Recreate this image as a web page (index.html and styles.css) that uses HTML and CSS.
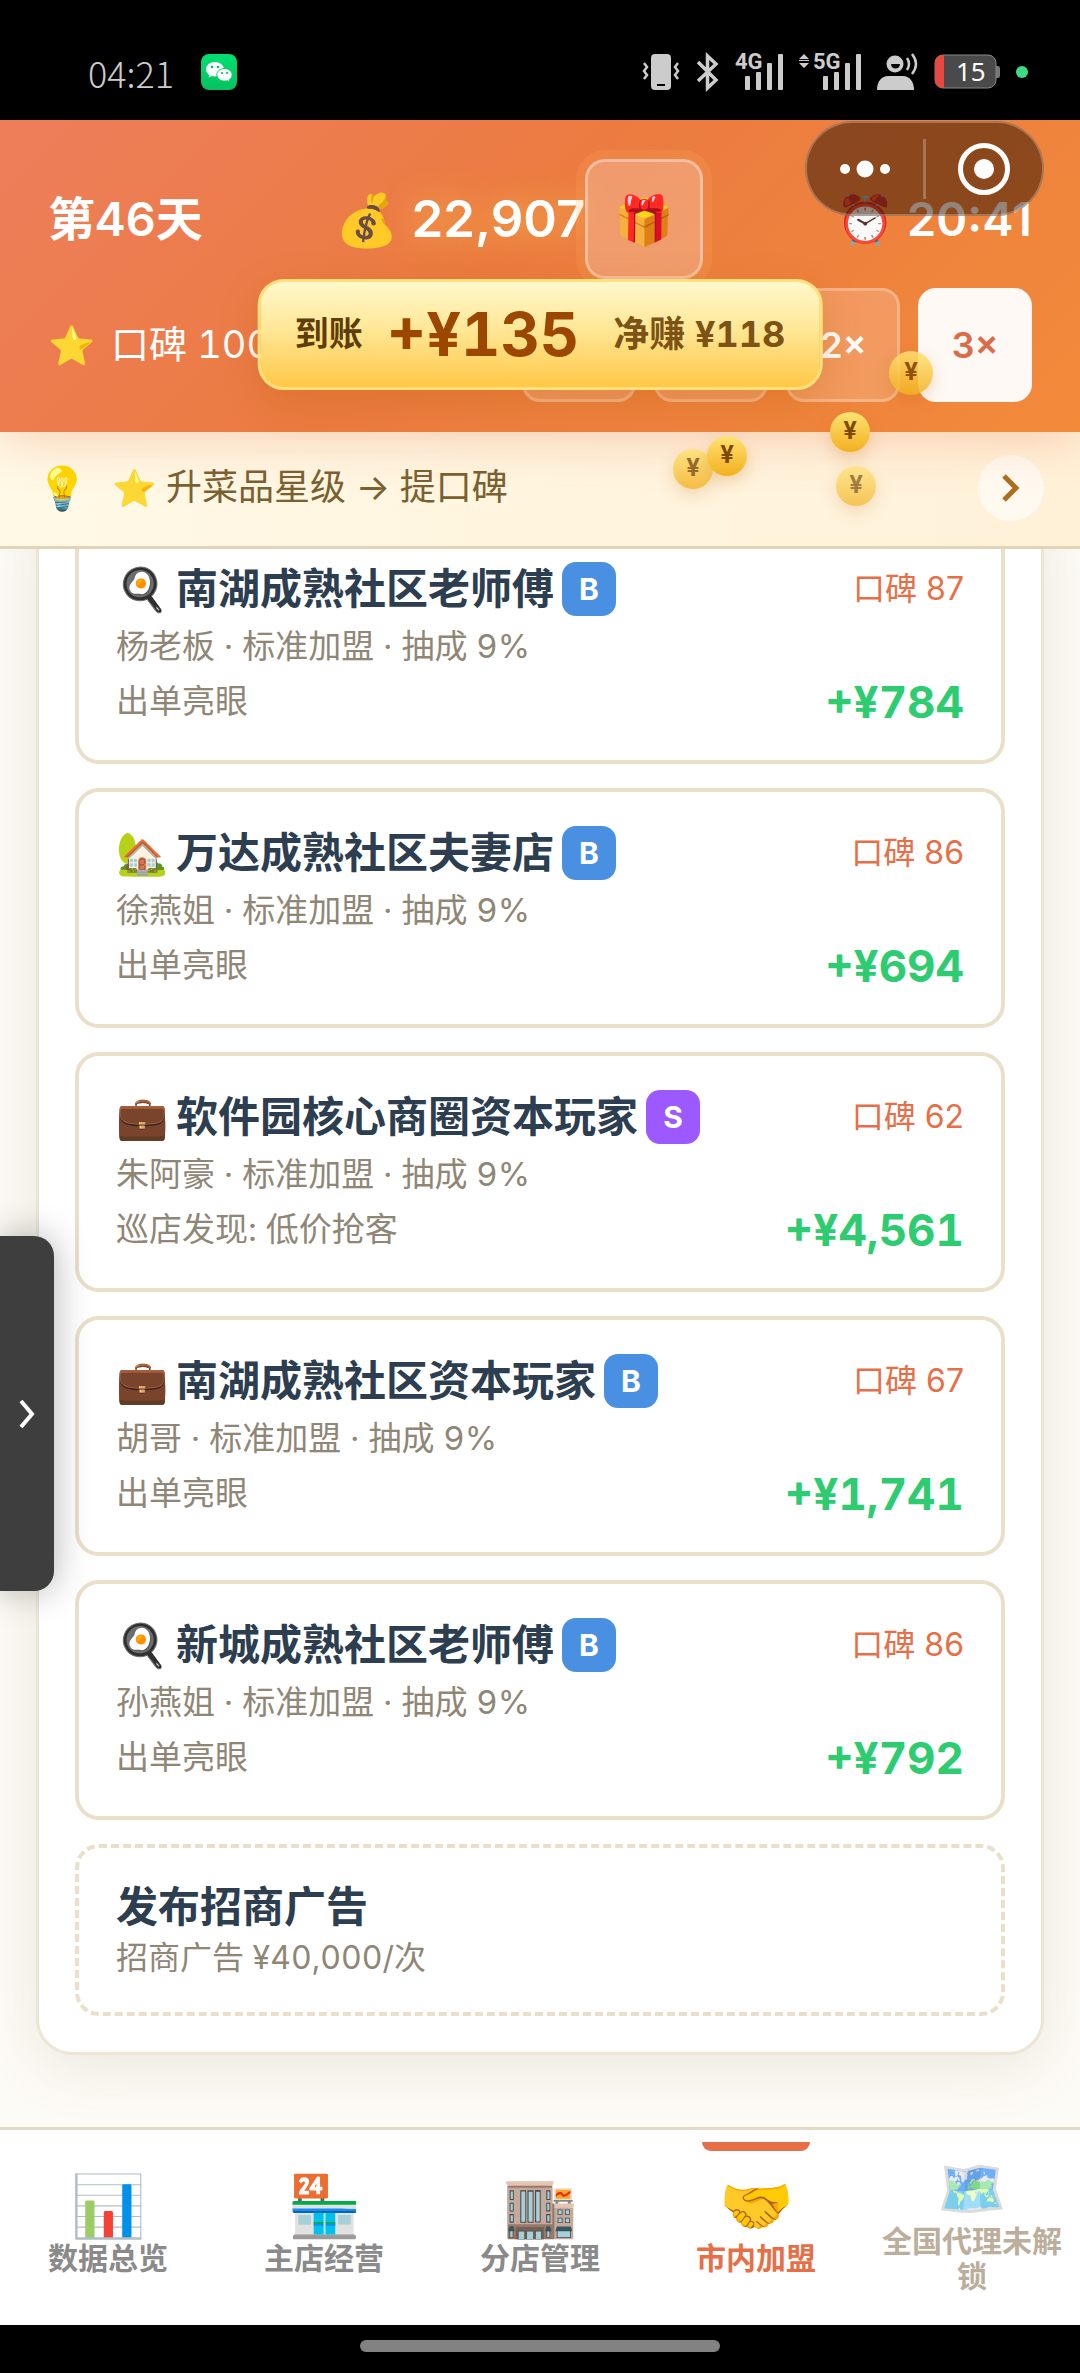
FILE: index.html
```html
<!DOCTYPE html>
<html lang="zh-CN">
<head>
  <meta charset="utf-8">
  <meta name="viewport" content="width=device-width, initial-scale=1">
  <title>市内加盟</title>
  <link rel="stylesheet" href="styles.css">
</head>
<body>
  <div class="status-bar">
    <div class="status-left">
      <span class="clock">04:21</span>
      <svg class="wechat" width="36" height="36" viewBox="0 0 36 36">
        <defs>
          <linearGradient id="wx" x1="0" y1="0" x2="0" y2="1"><stop offset="0" stop-color="#00e070"/><stop offset="1" stop-color="#06c160"/></linearGradient>
        </defs>
        <rect width="36" height="36" rx="8" fill="url(#wx)"/>
        <path d="M14 8c-5 0-9 3.200-9 7.300 0 2.300 1.200 4.300 3.200 5.600L7.500 23.500l3-1.500c1.100.300 2.300.500 3.500.500 5 0 9-3.200 9-7.200S19 8 14 8z" fill="#fff"/>
        <path d="M23.500 14.500c-4.300 0-7.700 2.800-7.700 6.300s3.400 6.300 7.700 6.300c1 0 2-.100 2.900-.400l2.500 1.300-.600-2.200c1.700-1.200 2.800-3 2.800-5 0-3.500-3.400-6.300-7.600-6.300z" fill="#fff" stroke="#05cf67" stroke-width="1"/>
        <g fill="#06b95c"><circle cx="11" cy="13" r="1.300"/><circle cx="17" cy="13" r="1.300"/><circle cx="21" cy="19" r="1.100"/><circle cx="26" cy="19" r="1.100"/></g>
      </svg>
    </div>
    <div class="status-right">
      <svg width="38" height="38" viewBox="0 0 38 38">
        <rect x="9" y="1" width="20" height="36" rx="4" fill="#ccc"/>
        <rect x="15" y="31" width="8" height="2" fill="#000"/>
        <path d="M2 10l3 4-3 4 3 4-3 4M36 10l-3 4 3 4-3 4 3 4" fill="none" stroke="#ccc" stroke-width="2.500"/>
      </svg>
      <svg width="23" height="38" viewBox="0 0 23 38">
        <path d="M2 9l18 18-8.500 8V3L20 11 2 28" fill="none" stroke="#ccc" stroke-width="3.500"/>
      </svg>
      <svg width="48" height="38" viewBox="0 0 48 38" fill="#ccc">
        <text class="net" x="0" y="16">4G</text>
        <rect x="10" y="23" width="5" height="14" rx="1"/><rect x="21" y="19" width="5" height="18" rx="1"/><rect x="32" y="10" width="5" height="27" rx="1"/><rect x="43" y="1" width="5" height="36" rx="1"/>
      </svg>
      <svg width="62" height="38" viewBox="0 0 62 38" fill="#ccc">
        <path d="M5 1l5 5H0zM5 15l5-5H0zM0 7h10v1H0z"/>
        <text class="net" x="14" y="16">5G</text>
        <rect x="24" y="23" width="5" height="14" rx="1"/><rect x="35" y="19" width="5" height="18" rx="1"/><rect x="46" y="10" width="5" height="27" rx="1"/><rect x="57" y="1" width="5" height="36" rx="1"/>
      </svg>
      <svg width="41" height="38" viewBox="0 0 41 38">
        <circle cx="18" cy="11" r="8.500" fill="#ccc"/>
        <path d="M14 11h9c0 6-9 6-9 0z" fill="#000"/>
        <path d="M0 37c0-9 5-14 11-14h15c6 0 11 5 11 14z" fill="#ccc"/>
        <path d="M30 5q4 6 0 12M35 1q8 10 0 20" fill="none" stroke="#ccc" stroke-width="2.500"/>
      </svg>
      <svg width="66" height="36" viewBox="0 0 66 36">
        <path d="M62 12h2q2 0 2 3v6q0 3-2 3h-2z" fill="#777"/>
        <rect x="1" y="1" width="61" height="33" rx="8" fill="#4a4a4a" stroke="#888"/>
        <path d="M10 1H9a8 8 0 0 0-8 8v17a8 8 0 0 0 8 8h1z" fill="#e8483f"/>
        <text class="battery-level" x="22" y="27">15</text>
      </svg>
      <svg width="12" height="12" viewBox="0 0 12 12"><circle cx="6" cy="6" r="6" fill="#3ddc84"/></svg>
    </div>
  </div>

  <header class="header">
    <div class="header-row">
      <span class="day">第46天</span>
      <div class="wallet">
        <span class="emoji bag">💰</span>
        <span class="money">22,907</span>
        <button class="gift" type="button" aria-label="礼物"><span class="emoji">🎁</span></button>
      </div>
      <div class="timer"><span class="emoji">⏰</span><span>20:41</span></div>
    </div>
    <div class="header-row">
      <div class="fame"><span class="emoji">⭐</span><span>口碑 100</span></div>
      <div class="speeds">
        <button type="button" class="speed" aria-label="暂停"></button>
        <button type="button" class="speed" aria-label="1×"></button>
        <button type="button" class="speed">2×</button>
        <button type="button" class="speed active">3×</button>
      </div>
    </div>

    <div class="capsule">
      <button type="button" aria-label="更多">
        <svg width="52" height="20" viewBox="0 0 52 20" fill="#fff"><circle cx="6" cy="10" r="5"/><circle cx="26" cy="10" r="8.500"/><circle cx="46" cy="10" r="5"/></svg>
      </button>
      <button type="button" aria-label="关闭">
        <svg width="54" height="54" viewBox="0 0 54 54"><circle cx="27" cy="27" r="23.500" fill="none" stroke="#fff" stroke-width="5"/><circle cx="27" cy="27" r="10" fill="#fff"/></svg>
      </button>
    </div>

    <div class="toast">
      <span class="toast-label">到账</span>
      <strong class="toast-amount">+¥135</strong>
      <span class="toast-net">净赚 ¥118</span>
    </div>

    <span class="coin coin-a">¥</span>
    <span class="coin coin-b">¥</span>
    <span class="coin coin-c">¥</span>
    <span class="coin coin-d">¥</span>
    <span class="coin coin-e">¥</span>
  </header>

  <div class="tip">
    <span class="emoji bulb">💡</span>
    <span class="emoji">⭐</span>
    <span class="tip-text">升菜品星级 → 提口碑</span>
    <button class="tip-next" type="button" aria-label="下一条">
      <svg width="18" height="28" viewBox="0 0 18 28"><path d="M2 2L14 14 2 26" fill="none" stroke="#a8701f" stroke-width="5"/></svg>
    </button>
  </div>

  <main class="content">
    <section class="panel">
      <article class="card">
        <div class="card-row">
          <h2><span class="emoji">🍳</span>南湖成熟社区老师傅<span class="badge">B</span></h2>
          <span class="score">口碑 87</span>
        </div>
        <p class="meta">杨老板 · 标准加盟 · 抽成 9%</p>
        <div class="card-row bottom">
          <span class="note">出单亮眼</span>
          <strong class="income">+¥784</strong>
        </div>
      </article>
      <article class="card">
        <div class="card-row">
          <h2><span class="emoji">🏡</span>万达成熟社区夫妻店<span class="badge">B</span></h2>
          <span class="score">口碑 86</span>
        </div>
        <p class="meta">徐燕姐 · 标准加盟 · 抽成 9%</p>
        <div class="card-row bottom">
          <span class="note">出单亮眼</span>
          <strong class="income">+¥694</strong>
        </div>
      </article>
      <article class="card">
        <div class="card-row">
          <h2><span class="emoji">💼</span>软件园核心商圈资本玩家<span class="badge s">S</span></h2>
          <span class="score">口碑 62</span>
        </div>
        <p class="meta">朱阿豪 · 标准加盟 · 抽成 9%</p>
        <div class="card-row bottom">
          <span class="note">巡店发现: 低价抢客</span>
          <strong class="income">+¥4,561</strong>
        </div>
      </article>
      <article class="card">
        <div class="card-row">
          <h2><span class="emoji">💼</span>南湖成熟社区资本玩家<span class="badge">B</span></h2>
          <span class="score">口碑 67</span>
        </div>
        <p class="meta">胡哥 · 标准加盟 · 抽成 9%</p>
        <div class="card-row bottom">
          <span class="note">出单亮眼</span>
          <strong class="income">+¥1,741</strong>
        </div>
      </article>
      <article class="card">
        <div class="card-row">
          <h2><span class="emoji">🍳</span>新城成熟社区老师傅<span class="badge">B</span></h2>
          <span class="score">口碑 86</span>
        </div>
        <p class="meta">孙燕姐 · 标准加盟 · 抽成 9%</p>
        <div class="card-row bottom">
          <span class="note">出单亮眼</span>
          <strong class="income">+¥792</strong>
        </div>
      </article>
      <button class="card card-add" type="button">
        <span class="add-title">发布招商广告</span>
        <span class="meta">招商广告 ¥40,000/次</span>
      </button>
    </section>
  </main>

  <button class="drawer" type="button" aria-label="展开">
    <svg width="18" height="30" viewBox="0 0 18 30"><path d="M3 2l11 13L3 28" fill="none" stroke="#fff" stroke-width="4"/></svg>
  </button>

  <nav class="tabs">
    <a href="#overview"><span class="emoji">📊</span>数据总览</a>
    <a href="#main-shop"><span class="emoji">🏪</span>主店经营</a>
    <a href="#branches"><span class="emoji">🏬</span>分店管理</a>
    <a href="#franchise" class="active"><span class="emoji">🤝</span>市内加盟</a>
    <a href="#agency" class="locked"><span class="emoji">🗺️</span>全国代理未解锁</a>
  </nav>
  <div class="home-bar"><span></span></div>
</body>
</html>
```
FILE: styles.css
```css
:root {
  --orange: #e76f47;
  --line: #eadfc8;
  --ink: #2c3e50;
  --muted: #8f8676;
}

* {
  box-sizing: border-box;
}

body {
  margin: 0;
  height: 100vh;
  display: flex;
  flex-direction: column;
  position: relative;
  overflow: hidden;
  font-family: Inter, "Noto Sans CJK SC", sans-serif;
  font-variant-numeric: tabular-nums;
  line-height: 1.2;
  background: #fdfbf6;
}

button {
  font-family: inherit;
  font-variant-numeric: inherit;
  padding: 0;
  border: 0;
  cursor: pointer;
}

svg {
  display: block;
  flex: none;
  overflow: visible;
}

.emoji {
  line-height: 1;
  flex: none;
}

/* status bar */
.status-bar {
  position: relative;
  z-index: 3;
  height: 120px;
  padding: 24px 52px 0 88px;
  display: flex;
  align-items: center;
  justify-content: space-between;
  background: #000;
}

.status-left {
  display: flex;
  align-items: center;
  gap: 27px;
}

.status-right {
  display: flex;
  align-items: center;
  gap: 16px;
}

.clock {
  font-family: "Noto Sans CJK SC", sans-serif;
  font-size: 36px;
  font-weight: 300;
  line-height: 34px;
  color: #ccc;
}

.net {
  font: 700 22px Roboto, sans-serif;
}

.battery-level {
  font: 400 26px "Noto Sans", sans-serif;
  fill: #fff;
}

/* header */
.header {
  position: relative;
  z-index: 2;
  padding: 39px 48px 30px;
  display: flex;
  flex-direction: column;
  gap: 9px;
  color: #fff;
  background: linear-gradient(135deg, #ee7e5b 0%, #eb7b40 45%, #f28a3a 100%);
  box-shadow: 0 6px 48px rgba(231, 111, 71, 0.3);
}

.header-row {
  display: flex;
  align-items: center;
  justify-content: space-between;
}

.day {
  font-size: 47px;
  font-weight: 600;
}

.wallet {
  display: flex;
  align-items: center;
}

.bag {
  font-size: 51px;
  margin-right: 12px;
}

.money {
  font-size: 51px;
  font-weight: 600;
  font-variant-numeric: normal;
  text-shadow: 0 0 30px rgba(255, 215, 90, 0.6);
}

.gift {
  width: 118px;
  height: 120px;
  font-size: 48px;
  border: 3px solid rgba(255, 255, 255, 0.35);
  border-radius: 20px;
  background: rgba(255, 255, 255, 0.24);
  box-shadow: 0 0 0 9px rgba(255, 170, 90, 0.2);
}

.timer {
  display: flex;
  align-items: center;
  gap: 12px;
  font-size: 47px;
  font-weight: 600;
  font-variant-numeric: normal;
}

.fame {
  display: flex;
  align-items: center;
  gap: 16px;
  font-size: 38px;
}

.speeds {
  display: flex;
  gap: 18px;
}

.speed {
  width: 114px;
  height: 114px;
  border: 3px solid rgba(255, 255, 255, 0.25);
  border-radius: 18px;
  background: rgba(255, 255, 255, 0.18);
  color: #fff;
  font-size: 36px;
  font-weight: 600;
}

.speed.active {
  border-color: #fef9f5;
  background: #fef9f5;
  color: #dc6b49;
}

.capsule {
  position: absolute;
  top: 1px;
  right: 36px;
  width: 239px;
  height: 95px;
  display: flex;
  align-items: center;
  border: 2px solid rgba(255, 255, 255, 0.25);
  border-radius: 48px;
  background: rgba(50, 20, 0, 0.52);
}

.capsule button {
  flex: 1;
  height: 60px;
  display: flex;
  align-items: center;
  justify-content: center;
  background: none;
}

.capsule button + button {
  border-left: 3px solid rgba(255, 255, 255, 0.25);
}

.toast {
  position: absolute;
  top: 159px;
  left: 50%;
  transform: translateX(-50%);
  height: 111px;
  padding: 0 34px;
  display: flex;
  align-items: center;
  white-space: nowrap;
  border: 3px solid #ffe07c;
  border-radius: 26px;
  background: linear-gradient(#fff8cc, #ffe796 45%, #ffc847);
  box-shadow: 0 12px 36px rgba(190, 100, 10, 0.3);
}

.toast-label {
  font-size: 34px;
  font-weight: 700;
  color: #5f3d08;
}

.toast-amount {
  margin: 0 34px 0 24px;
  font-size: 61px;
  color: #9c4700;
}

.toast-net {
  font-size: 36px;
  font-weight: 700;
  color: #7c5314;
}

.coin {
  position: absolute;
  width: 40px;
  height: 40px;
  border-radius: 50%;
  background: linear-gradient(#ffe272, #f3b01f);
  box-shadow: 0 6px 15px rgba(190, 110, 10, 0.25);
  color: #7c4a03;
  font-size: 24px;
  font-weight: 700;
  line-height: 38px;
  text-align: center;
}

.coin-a {
  top: 231px;
  left: 889px;
  width: 44px;
  height: 44px;
  line-height: 42px;
  opacity: 0.85;
}

.coin-b {
  top: 292px;
  left: 830px;
}

.coin-c {
  top: 316px;
  left: 707px;
}

.coin-d {
  top: 329px;
  left: 673px;
  z-index: -1;
  opacity: 0.8;
}

.coin-e {
  top: 346px;
  left: 836px;
  opacity: 0.7;
}

/* tip */
.tip {
  height: 117px;
  padding: 0 36px 3px;
  display: flex;
  align-items: center;
  border-bottom: 3px solid #e0d5b4;
  background: linear-gradient(90deg, #fff9e6, #fff1d8);
  color: #7a6030;
  font-size: 36px;
}

.tip .bulb {
  font-size: 42px;
  margin-right: 24px;
}

.tip-text {
  flex: 1;
  margin-left: 9px;
}

.tip-next {
  width: 66px;
  height: 66px;
  display: flex;
  align-items: center;
  justify-content: center;
  border-radius: 50%;
  background: rgba(255, 255, 255, 0.6);
}

/* list, scrolled to its end */
.content {
  flex: 1;
  min-height: 0;
  overflow: hidden;
  padding: 0 36px 72px;
  display: flex;
  flex-direction: column;
  justify-content: flex-end;
}

.panel {
  flex: none;
  padding: 36px;
  display: flex;
  flex-direction: column;
  gap: 24px;
  border: 3px solid #ece5d8;
  border-radius: 36px;
  background: #fff;
  box-shadow: 0 12px 60px rgba(110, 90, 50, 0.12);
}

.card {
  padding: 34px 37px 30px;
  border: 4px solid var(--line);
  border-radius: 24px;
  background: #fff;
}

.card-row {
  height: 54px;
  display: flex;
  align-items: center;
  justify-content: space-between;
}

.card-row.bottom {
  height: 56px;
  margin-top: 6px;
}

.card h2 {
  margin: 0;
  display: flex;
  align-items: center;
  font-size: 42px;
  line-height: 54px;
  color: var(--ink);
}

.card h2 .emoji {
  margin-right: 8px;
}

.badge {
  width: 54px;
  height: 54px;
  margin-left: 8px;
  border-radius: 14px;
  background: #4a90e2;
  color: #fff;
  font-size: 30px;
  text-align: center;
}

.badge.s {
  background: #9b59ff;
}

.score {
  font-size: 32px;
  font-variant-numeric: normal;
  color: var(--orange);
}

.meta {
  display: block;
  margin: 8px 0 0;
  font-size: 33px;
  line-height: 44px;
  color: var(--muted);
}

.note {
  font-size: 33px;
  color: var(--muted);
}

.income {
  font-size: 44px;
  color: #2ecc71;
}

.card-add {
  padding: 32px 37px;
  border-style: dashed;
  text-align: left;
}

.add-title {
  display: block;
  font-size: 42px;
  font-weight: 700;
  line-height: 54px;
  color: var(--ink);
}

.card-add .meta {
  margin-top: 2px;
  font-size: 32px;
}

/* side drawer handle */
.drawer {
  position: absolute;
  left: 0;
  top: 1236px;
  width: 54px;
  height: 355px;
  display: flex;
  align-items: center;
  justify-content: center;
  border-radius: 0 20px 20px 0;
  background: #3e3e3e;
  box-shadow: 0 0 36px rgba(0, 0, 0, 0.3);
}

/* bottom tabs */
.tabs {
  display: flex;
  height: 198px;
  padding: 12px 0 16px;
  border-top: 3px solid #e4dac9;
  background: #fff;
}

.tabs a {
  flex: 1;
  padding: 0 15px;
  position: relative;
  display: flex;
  flex-direction: column;
  align-items: center;
  justify-content: center;
  color: #8a8a8a;
  font-size: 30px;
  font-weight: 700;
  line-height: 35px;
  text-align: center;
  text-decoration: none;
}

.tabs .emoji {
  font-size: 60px;
  line-height: 60px;
  margin-bottom: 6px;
}

.tabs a.active {
  color: var(--orange);
}

.tabs a.active::before {
  content: "";
  position: absolute;
  top: 0;
  left: 50%;
  width: 108px;
  height: 9px;
  margin-left: -54px;
  border-radius: 0 0 9px 9px;
  background: var(--orange);
}

.tabs a.locked {
  color: #bcae9c;
}

.tabs a.locked .emoji {
  font-size: 56px;
  opacity: 0.65;
}

.home-bar {
  height: 48px;
  padding-top: 15px;
  background: #000;
}

.home-bar span {
  display: block;
  width: 33.333%;
  height: 12px;
  margin: 0 auto;
  border-radius: 6px;
  background: #828282;
}
```
